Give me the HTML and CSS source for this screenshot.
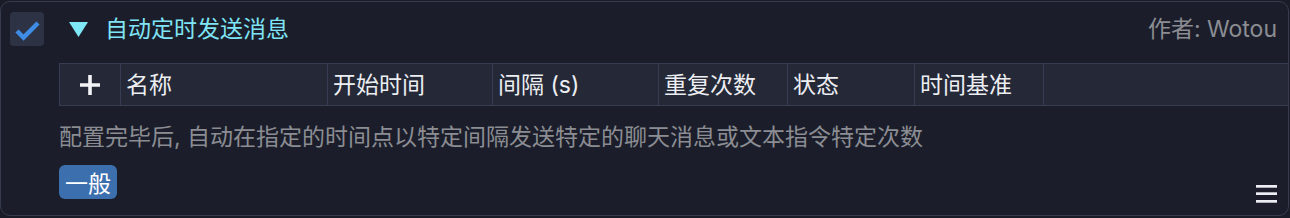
FILE: index.html
```html
<!DOCTYPE html>
<html lang="zh-CN">
<head>
<meta charset="utf-8">
<title>自动定时发送消息</title>
<link rel="stylesheet" href="styles.css">
</head>
<body>
<div class="card">
  <div class="head">
    <div class="checkbox">
      <svg width="34" height="34" viewBox="0 0 34 34"><polyline points="7,19 13.5,25.5 28,11" fill="none" stroke="#3f8ce6" stroke-width="4.5"/></svg>
    </div>
    <svg class="tri" width="19" height="15" viewBox="0 0 19 15"><polygon points="0,0 19,0 9.5,15" fill="#7ee8f7"/></svg>
    <div class="title">自动定时发送消息</div>
    <div class="author">作者: Wotou</div>
  </div>
  <div class="table">
    <div class="cell add">
      <svg width="22" height="22" viewBox="0 0 22 22"><path d="M11 1V21M1 11H21" stroke="#f2f3f6" stroke-width="3.6"/></svg>
    </div>
    <div class="cell">名称</div>
    <div class="cell">开始时间</div>
    <div class="cell">间隔 (s)</div>
    <div class="cell">重复次数</div>
    <div class="cell">状态</div>
    <div class="cell">时间基准</div>
    <div class="cell"></div>
  </div>
  <div class="body">
    <div class="desc">配置完毕后, 自动在指定的时间点以特定间隔发送特定的聊天消息或文本指令特定次数</div>
    <div class="tags"><span class="badge">一般</span></div>
  </div>
  <svg class="menu" width="22" height="19" viewBox="0 0 22 19"><rect x="0" y="1" width="21" height="2.7" fill="#eceef3"/><rect x="0" y="8.3" width="21" height="2.7" fill="#eceef3"/><rect x="0" y="16" width="21" height="2.7" fill="#eceef3"/></svg>
</div>
</body>
</html>
```

FILE: styles.css
```css
* { box-sizing: border-box; }
html, body {
  margin: 0;
  padding: 0;
  background: #1a1d28;
}
body {
  font-family: Inter, "Noto Sans CJK SC", sans-serif;
  font-size: 23px;
  width: 1290px;
  height: 218px;
  overflow: hidden;
}
.card {
  position: relative;
  margin-top: 1px;
  width: 1289px;
  height: 215px;
  border: 1px solid #363c4e;
  border-radius: 10px;
  background: #1b1e2a;
  padding-top: 10px;
}
.head {
  display: flex;
  align-items: center;
  height: 34px;
  padding-left: 9px;
  padding-right: 11px;
}
.checkbox {
  width: 34px;
  height: 34px;
  border-radius: 4px;
  background: #2d3345;
  display: flex;
}
.tri {
  margin-left: 25px;
  margin-top: 1px;
}
.title {
  margin-left: 17px;
  color: #7fe4f5;
  line-height: 30px;
}
.author {
  margin-left: auto;
  color: #8b8d93;
  line-height: 30px;
}
.table {
  margin-top: 17px;
  margin-left: 58px;
  display: grid;
  grid-template-columns: 60px 207px 165px 166px 129px 127px 129px 1fr;
  height: 43px;
  border-top: 1px solid #363d52;
  border-bottom: 1px solid #363d52;
  border-left: 1px solid #363d52;
  background: #242837;
  color: #eceef2;
}
.cell {
  display: flex;
  align-items: center;
  padding-left: 5px;
  border-left: 1px solid #363d52;
  line-height: 30px;
  white-space: nowrap;
}
.cell.add {
  border-left: none;
  padding-left: 0;
  justify-content: center;
}
.body {
  padding-left: 58px;
}
.desc {
  margin-top: 16px;
  color: #8b8d93;
  line-height: 30px;
  white-space: nowrap;
}
.tags {
  margin-top: 13px;
  display: flex;
}
.badge {
  display: inline-flex;
  align-items: center;
  justify-content: center;
  width: 58px;
  height: 34px;
  border-radius: 6px;
  background: #3b6fae;
  color: #ffffff;
}
.menu {
  position: absolute;
  right: 10px;
  bottom: 12px;
}
```
